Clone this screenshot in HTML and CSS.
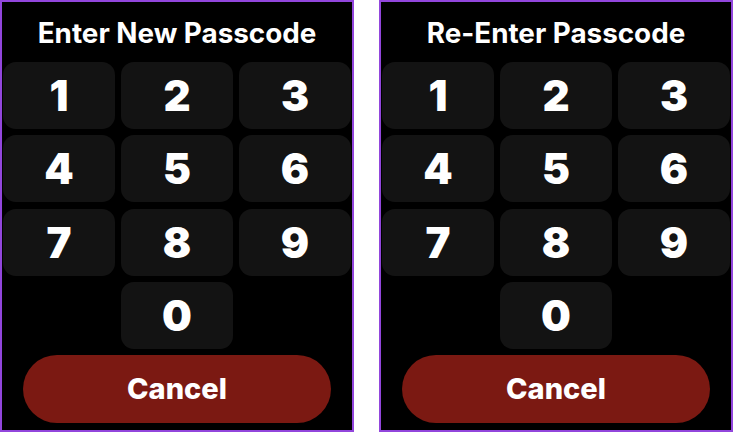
FILE: index.html
```html
<!DOCTYPE html>
<html lang="en">
<head>
    <meta charset="UTF-8">
    <meta name="viewport" content="width=device-width, initial-scale=1.0">
    <title>Passcode</title>
    <link rel="stylesheet" href="styles.css">
</head>
<body>

    <div class="screen">
        <h2 class="title">Enter New Passcode</h2>
        <div class="keypad">
            <button class="key">1</button>
            <button class="key">2</button>
            <button class="key">3</button>
            <button class="key">4</button>
            <button class="key">5</button>
            <button class="key">6</button>
            <button class="key">7</button>
            <button class="key">8</button>
            <button class="key">9</button>
            <button class="key zero">0</button>
        </div>
        <button class="cancel">Cancel</button>
    </div>

    <div class="screen">
        <h2 class="title">Re-Enter Passcode</h2>
        <div class="keypad">
            <button class="key">1</button>
            <button class="key">2</button>
            <button class="key">3</button>
            <button class="key">4</button>
            <button class="key">5</button>
            <button class="key">6</button>
            <button class="key">7</button>
            <button class="key">8</button>
            <button class="key">9</button>
            <button class="key zero">0</button>
        </div>
        <button class="cancel">Cancel</button>
    </div>

</body>
</html>
```

FILE: styles.css
```css
body {
    font-family: Inter, "Noto Sans", sans-serif;
    margin: 0;
    background: #fff;
    display: flex;
    gap: 25px;
}
.screen {
    width: 354px;
    height: 432px;
    box-sizing: border-box;
    border: 2px solid #9246dc;
    background: #000;
    padding: 0 1px 7px;
    display: flex;
    flex-direction: column;
}
.title {
    margin: 0;
    height: 60px;
    display: flex;
    align-items: center;
    justify-content: center;
    color: #fff;
    font-size: 27.8px;
    font-weight: 700;
    padding-top: 2px;
    box-sizing: border-box;
}
.keypad {
    display: grid;
    grid-template-columns: repeat(3, 1fr);
    grid-auto-rows: 67px;
    gap: 6.3px 6px;
}
.key {
    background: #131313;
    border: none;
    border-radius: 13px;
    color: #fff;
    font-family: inherit;
    font-size: 42px;
    font-weight: 900;
    padding: 0;
    cursor: pointer;
}
.zero {
    grid-column: 2;
}
.cancel {
    align-self: center;
    width: 308px;
    height: 68px;
    margin-top: 6px;
    background: #7b1912;
    border: none;
    border-radius: 34px;
    color: #fff;
    font-family: inherit;
    font-size: 29px;
    font-weight: 800;
    cursor: pointer;
}
```
